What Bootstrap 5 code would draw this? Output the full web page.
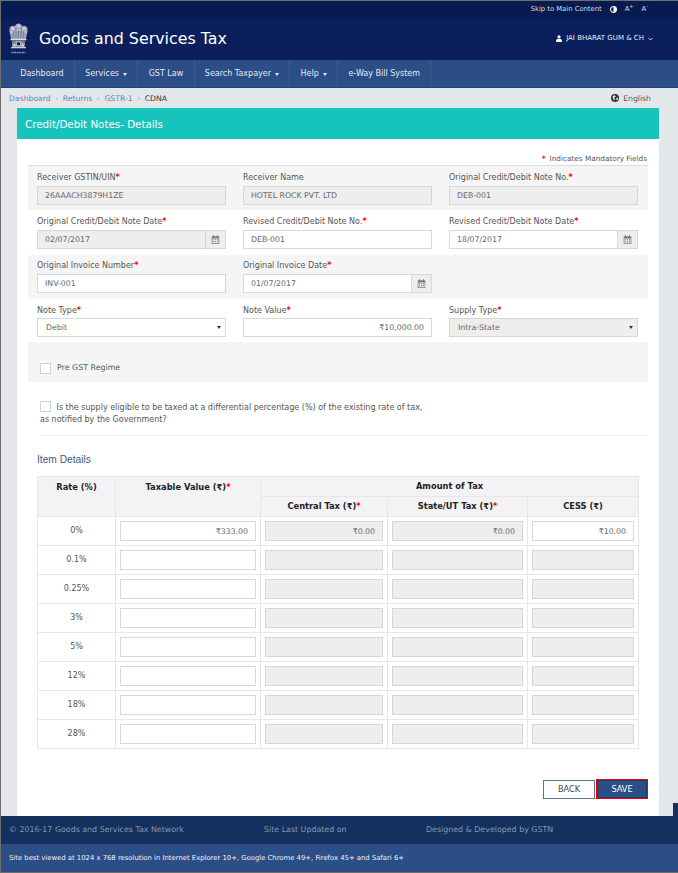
<!DOCTYPE html>
<html lang="en">

<head>
    <meta charset="UTF-8">
    <meta name="viewport" content="width=device-width, initial-scale=1.0">
    <title>Credit/Debit Notes - Details</title>
    <link href="https://cdn.jsdelivr.net/npm/bootstrap@5.3.3/dist/css/bootstrap.min.css" rel="stylesheet">
    <script src="https://cdn.jsdelivr.net/npm/bootstrap@5.3.3/dist/js/bootstrap.bundle.min.js"></script>
    <style>
        html, body { height: 873px; overflow: hidden; background: #e4e7ea; }
        body { font-family: "DejaVu Sans", Verdana, sans-serif; font-size: 8px; color: #555; }
        .gst-frame { border: 1px solid #6e6e6e; border-right: 0; height: 873px; position: relative; display: flex; flex-direction: column; }

        .gst-topbar { height: 16px; background: #061b50; color: #d8deea; font-size: 6.8px; padding-right: 30px; }
        .gst-header { height: 43px; background: #0b1f5c; color: #fff; padding: 0 25px 0 7px; }
        .gst-title { font-size: 15.850px; margin-left: 10px; }
        .gst-user { font-size: 7px; color: #e8ebf3; }

        .gst-nav { height: 28px; background: #2c4e86; padding-left: 9px; border-bottom: 1px solid #24406f; }
        .gst-nav .nav-link { color: #e4e9f2; font-size: 8px; padding: 1px 10.300px 0 10.300px; height: 27px; display: flex; align-items: center; border-right: 1px solid #3a5b91; font-weight: 500; }
        .gst-caret { display: inline-block; width: 0; height: 0; border-left: 2.500px solid transparent; border-right: 2.500px solid transparent; border-top: 3px solid #e4e9f2; margin-left: 4px; }

        .gst-crumbbar { height: 20px; padding: 1px 27px 0 8px; font-size: 7.7px; }
        .gst-crumbbar .breadcrumb { margin: 0; --bs-breadcrumb-divider: "›"; --bs-breadcrumb-item-padding-x: 4.500px; --bs-breadcrumb-divider-color: #aab3bf; }
        .gst-crumbbar a { color: #6185b5; text-decoration: none; }
        .gst-crumbbar .active { color: #333; }

        .gst-page { flex: 1; margin: 0 19px 0 16px; background: #fff; display: flex; flex-direction: column; min-height: 0; }
        .gst-pagehead { height: 31px; background: #17c4bb; color: #fff; font-size: 10.300px; padding: 2px 0 0 8px; }
        .gst-mandatory { height: 27px; padding: 0 1px 0 0; font-size: 7.300px; border-bottom: 1px solid #dcdcdc; margin: 0 11px; }
        .gst-star { color: #f00; font-weight: 700; }

        .gst-band { margin: 0 11px; padding: 0 1.500px 0 .5px; }
        .gst-band .row { margin: 0; }
        .gst-band .col-4 { padding: 0 8.500px; }
        .gst-shade { background: #f5f5f5; }
        .gst-band label { display: block; font-size: 8px; color: #555; margin: 0 0 3px; line-height: 11px; }
        .gst-r1 { height: 44px; padding-top: 6px; }
        .gst-r2 { height: 45px; padding-top: 6px; }
        .gst-r3 { height: 44px; padding-top: 5px; }
        .gst-r4 { height: 43px; padding-top: 6px; }
        .gst-band.gst-r4 label { margin-bottom: 2px; }

        .form-control, .form-select { font-size: 7.800px; color: #666; height: 19px; min-height: 0; padding: 0 7px; border: 1px solid #d9d9d9; border-radius: 0; box-shadow: none; background-color: #fff; }
        .form-control:disabled, .form-select:disabled { background-color: #eeeeee; border-color: #d6d6d6; opacity: 1; }
        .form-select { background-image: none; padding-left: 8px; }
        .gst-selectwrap { position: relative; }
        .gst-selectwrap::after { content: ""; position: absolute; right: 5px; top: 8px; border-left: 2px solid transparent; border-right: 2px solid transparent; border-top: 3px solid #333; }
        .input-group-text { width: 21px; padding: 0; justify-content: center; background: #eeeeee; border: 1px solid #d9d9d9; border-radius: 0; height: 19px; }
        .gst-band .input-group .form-control { flex: 1; }

        .gst-check { width: 11px; height: 11px; border: 1px solid #d4d4d4; background: #fff; display: inline-block; flex: none; }
        .gst-checkband { height: 40px; margin: 0 11px; padding: 12px 0 0 12px; font-size: 7.900px; color: #555; gap: 6px; }
        .gst-supply { margin: 19px 11px 0 23px; padding-bottom: 9px; border-bottom: 1px solid #efefef; font-size: 8px; color: #555; line-height: 12px; }
        .gst-supply .gst-check { vertical-align: -2px; margin-right: 3px; }
        .gst-subhead { margin: 17px 0 10px 20px; font-family: "Liberation Sans", Arial, sans-serif; font-size: 10.200px; color: #3d5a8a; line-height: 13px; }

        .gst-table { width: 601px; margin: 0 0 0 20px; table-layout: fixed; border-color: #e7e7e7; }
        .gst-table > :not(caption) > * > * { padding: 0; border-color: #e7e7e7; color: #555; background: transparent; box-shadow: none; }
        .gst-table th { background: #f3f3f5 !important; color: #222 !important; font-size: 8.300px; font-weight: 700; height: 20px; text-align: center; vertical-align: middle; }
        .gst-table th.gst-tall { vertical-align: top; padding-top: 4px; }
        .gst-table td { height: 28.900px; padding: 4px; text-align: center; vertical-align: middle; font-size: 8px; }
        .gst-table .form-control { height: 20px; text-align: right; padding: 0 7px; }

        .gst-actions { margin-top: auto; height: 37px; padding: 0 11px 0 0; gap: 1px; }
        .gst-back, .gst-save { font-size: 8.200px; height: 20px; width: 52px; padding: 0; border-radius: 0; }
        .gst-back { background: #fff; border: 1px solid #5d7389; color: #444; height: 19px; margin-top: 1px; }
        .gst-save { background: #2c4e86; border: 1px solid #f00; color: #fff; box-shadow: inset 0 0 0 1px #1f3b6e; }

        .gst-foot1 { height: 28px; background: #14305e; color: #7f98b8; font-size: 7.900px; padding: 0 8px; position: relative; }
        .gst-foot1 span { display: block; }
        .gst-foot2 { height: 28px; background: #2c4e86; color: #f0f3f8; font-size: 6.850px; padding: 1px 8px 0; }
        .gst-totop { position: absolute; right: 0; top: -13px; width: 5px; height: 13px; background: #14305e; }
    </style>
</head>

<body>
    <div class="gst-frame">
        <div class="gst-topbar d-flex align-items-center justify-content-end gap-2">
            <span>Skip to Main Content</span>
            <svg width="7" height="7" viewBox="0 0 10 10"><circle cx="5" cy="5" r="4.200" fill="#061b50" stroke="#fff" stroke-width="1.500"/><path d="M5 1a4 4 0 0 1 0 8z" fill="#fff"/></svg>
            <span>A<sup style="font-size:5px">+</sup></span>
            <span>A<sup style="font-size:5px">-</sup></span>
        </div>

        <header class="gst-header d-flex align-items-center justify-content-between">
            <div class="d-flex align-items-center">
                <svg width="21" height="32" viewBox="0 0 21 32" role="img" aria-label="Emblem of India">
                    <path d="M7 3.500C7 1.500 9 .5 10.500 .5S14 1.500 14 3.500c2-1.500 5-.5 5.500 2 .5 2.500-.5 5-1 7l-.5 3.500H3l-.5-3.500c-.5-2-1.500-4.500-1-7 .5-2.500 3.500-3.500 5.500-2z" fill="#a4a9ba"/>
                    <g fill="#d4d7e0">
                        <circle cx="10.500" cy="3" r="1.500"/><circle cx="5" cy="5.500" r="1.500"/><circle cx="16" cy="5.500" r="1.500"/>
                        <circle cx="9" cy="7" r=".9"/><circle cx="12" cy="7" r=".9"/><circle cx="3.500" cy="9" r=".9"/><circle cx="17.500" cy="9" r=".9"/>
                    </g>
                    <g fill="#747b95">
                        <path d="M7.500 5h1v10h-1zM12.500 5h1v10h-1zM10 8h1v7h-1zM4.800 8.500h1V15h-1zM15.200 8.500h1V15h-1z"/>
                    </g>
                    <rect x="2.500" y="16" width="16" height="1.300" fill="#dfe1e8"/>
                    <rect x="4" y="17.500" width="13" height="6.500" rx="1" fill="#7f8599"/>
                    <circle cx="10.500" cy="20.800" r="2.300" fill="#0b1f5c" stroke="#dfe1e8" stroke-width=".9"/>
                    <path d="M4.500 23.500l2-3.500 1.500 3.500zM13 23.500l1.500-3.500 2 3.500z" fill="#d4d7e0"/>
                    <rect x="3" y="24" width="15" height="1.300" fill="#c9ccd6"/>
                    <path d="M3.500 29.500h14" stroke="#8f95a8" stroke-width="1.300" stroke-dasharray="2 .6"/>
                </svg>
                <span class="gst-title">Goods and Services Tax</span>
            </div>
            <div class="gst-user d-flex align-items-center gap-1">
                <svg width="6" height="7" viewBox="0 0 12 14"><circle cx="6" cy="3.500" r="3.200" fill="#fff"/><path d="M0 14c0-5 2-6.500 3.500-6.500h5C10 7.500 12 9 12 14z" fill="#fff"/></svg>
                <span>JAI BHARAT GUM &amp; CH</span>
                <svg width="5" height="4" viewBox="0 0 10 8"><path d="M1 2l4 4 4-4" fill="none" stroke="#fff" stroke-width="1.600"/></svg>
            </div>
        </header>

        <nav class="gst-nav nav">
            <a class="nav-link" href="#">Dashboard</a>
            <a class="nav-link" href="#">Services<span class="gst-caret"></span></a>
            <a class="nav-link" href="#">GST Law</a>
            <a class="nav-link" href="#">Search Taxpayer<span class="gst-caret"></span></a>
            <a class="nav-link" href="#">Help<span class="gst-caret"></span></a>
            <a class="nav-link" href="#">e-Way Bill System</a>
        </nav>

        <div class="gst-crumbbar d-flex align-items-center justify-content-between">
            <ol class="breadcrumb">
                <li class="breadcrumb-item"><a href="#">Dashboard</a></li>
                <li class="breadcrumb-item"><a href="#">Returns</a></li>
                <li class="breadcrumb-item"><a href="#">GSTR-1</a></li>
                <li class="breadcrumb-item active">CDNA</li>
            </ol>
            <div class="d-flex align-items-center gap-1">
                <svg width="8" height="8" viewBox="0 0 10 10"><circle cx="5" cy="5" r="5" fill="#333"/><path d="M2 2.500l3-1 1 2-2 1 1 2-1 2-1.500-3zM7 4.500l2 .5-1 3-1.500-1z" fill="#e4e7ea"/></svg>
                <span>English</span>
            </div>
        </div>

        <main class="gst-page">
            <div class="gst-pagehead d-flex align-items-center">Credit/Debit Notes- Details</div>
            <div class="gst-mandatory d-flex align-items-end justify-content-end"><span class="gst-star me-1">*</span>Indicates Mandatory Fields</div>

            <div class="gst-band gst-shade gst-r1">
                <div class="row">
                    <div class="col-4"><label>Receiver GSTIN/UIN<span class="gst-star">*</span></label><input class="form-control" value="26AAACH3879H1ZE" disabled></div>
                    <div class="col-4"><label>Receiver Name</label><input class="form-control" value="HOTEL ROCK PVT. LTD" disabled></div>
                    <div class="col-4"><label>Original Credit/Debit Note No.<span class="gst-star">*</span></label><input class="form-control" value="DEB-001" disabled></div>
                </div>
            </div>
            <div class="gst-band gst-r2">
                <div class="row">
                    <div class="col-4"><label>Original Credit/Debit Note Date<span class="gst-star">*</span></label>
                        <div class="input-group flex-nowrap"><input class="form-control" value="02/07/2017" disabled><span class="input-group-text"><svg width="9" height="9" viewBox="0 0 13 13"><use href="#gst-cal"/></svg></span></div></div>
                    <div class="col-4"><label>Revised Credit/Debit Note No.<span class="gst-star">*</span></label><input class="form-control" value="DEB-001"></div>
                    <div class="col-4"><label>Revised Credit/Debit Note Date<span class="gst-star">*</span></label>
                        <div class="input-group flex-nowrap"><input class="form-control" value="18/07/2017"><span class="input-group-text"><svg width="9" height="9" viewBox="0 0 13 13"><use href="#gst-cal"/></svg></span></div></div>
                </div>
            </div>
            <div class="gst-band gst-shade gst-r3">
                <div class="row">
                    <div class="col-4"><label>Original Invoice Number<span class="gst-star">*</span></label><input class="form-control" value="INV-001"></div>
                    <div class="col-4"><label>Original Invoice Date<span class="gst-star">*</span></label>
                        <div class="input-group flex-nowrap"><input class="form-control" value="01/07/2017"><span class="input-group-text"><svg width="9" height="9" viewBox="0 0 13 13"><use href="#gst-cal"/></svg></span></div></div>
                </div>
            </div>
            <div class="gst-band gst-r4">
                <div class="row">
                    <div class="col-4"><label>Note Type<span class="gst-star">*</span></label>
                        <div class="gst-selectwrap"><select class="form-select"><option>Debit</option></select></div></div>
                    <div class="col-4"><label>Note Value<span class="gst-star">*</span></label><input class="form-control text-end" value="₹10,000.00"></div>
                    <div class="col-4"><label>Supply Type<span class="gst-star">*</span></label>
                        <div class="gst-selectwrap"><select class="form-select" disabled><option>Intra-State</option></select></div></div>
                </div>
            </div>

            <div class="gst-checkband gst-shade d-flex align-items-center">
                <span class="gst-check"></span><span>Pre GST Regime</span>
            </div>
            <div class="gst-supply">
                <span class="gst-check"></span> Is the supply eligible to be taxed at a differential percentage (%) of the existing rate of tax,<br>as notified by the Government?
            </div>

            <div class="gst-subhead">Item Details</div>
            <table class="table table-bordered gst-table mb-0">
                <colgroup><col style="width:78px"><col style="width:145px"><col style="width:127px"><col style="width:140px"><col style="width:111px"></colgroup>
                <thead>
                    <tr><th rowspan="2" class="gst-tall">Rate (%)</th><th rowspan="2" class="gst-tall">Taxable Value (₹)<span class="gst-star">*</span></th><th colspan="3">Amount of Tax</th></tr>
                    <tr><th>Central Tax (₹)<span class="gst-star">*</span></th><th>State/UT Tax (₹)<span class="gst-star">*</span></th><th>CESS (₹)</th></tr>
                </thead>
                <tbody>
                    <tr><td>0%</td><td><input class="form-control" value="₹333.00"></td><td><input class="form-control" value="₹0.00" disabled></td><td><input class="form-control" value="₹0.00" disabled></td><td><input class="form-control" value="₹10.00"></td></tr>
                    <tr><td>0.1%</td><td><input class="form-control"></td><td><input class="form-control" disabled></td><td><input class="form-control" disabled></td><td><input class="form-control" disabled></td></tr>
                    <tr><td>0.25%</td><td><input class="form-control"></td><td><input class="form-control" disabled></td><td><input class="form-control" disabled></td><td><input class="form-control" disabled></td></tr>
                    <tr><td>3%</td><td><input class="form-control"></td><td><input class="form-control" disabled></td><td><input class="form-control" disabled></td><td><input class="form-control" disabled></td></tr>
                    <tr><td>5%</td><td><input class="form-control"></td><td><input class="form-control" disabled></td><td><input class="form-control" disabled></td><td><input class="form-control" disabled></td></tr>
                    <tr><td>12%</td><td><input class="form-control"></td><td><input class="form-control" disabled></td><td><input class="form-control" disabled></td><td><input class="form-control" disabled></td></tr>
                    <tr><td>18%</td><td><input class="form-control"></td><td><input class="form-control" disabled></td><td><input class="form-control" disabled></td><td><input class="form-control" disabled></td></tr>
                    <tr><td>28%</td><td><input class="form-control"></td><td><input class="form-control" disabled></td><td><input class="form-control" disabled></td><td><input class="form-control" disabled></td></tr>
                </tbody>
            </table>

            <div class="gst-actions d-flex justify-content-end align-items-start">
                <button type="button" class="btn gst-back">BACK</button>
                <button type="button" class="btn gst-save">SAVE</button>
            </div>
        </main>

        <footer class="gst-foot1 d-flex align-items-center">
            <span class="gst-totop"></span>
            <span style="width:255px">© 2016-17 Goods and Services Tax Network</span>
            <span style="width:162px">Site Last Updated on</span>
            <span>Designed &amp; Developed by GSTN</span>
        </footer>
        <div class="gst-foot2 d-flex align-items-center">Site best viewed at 1024 x 768 resolution in Internet Explorer 10+, Google Chrome 49+, Firefox 45+ and Safari 6+</div>
    </div>

    <svg width="0" height="0" class="position-absolute">
        <symbol id="gst-cal" viewBox="0 0 13 13">
            <path d="M1 2h11v11H1z" fill="#777"/>
            <path d="M3 .5h1.500v3H3zM8.500 .5H10v3H8.500z" fill="#777"/>
            <path d="M2 5h9v7H2z" fill="#eee"/>
            <path d="M3 6h1.500v1.500H3zM5.800 6h1.500v1.500H5.800zM8.500 6H10v1.500H8.500zM3 9h1.500v1.500H3zM5.800 9h1.500v1.500H5.800zM8.500 9H10v1.500H8.500z" fill="#777"/>
        </symbol>
    </svg>
</body>

</html>
